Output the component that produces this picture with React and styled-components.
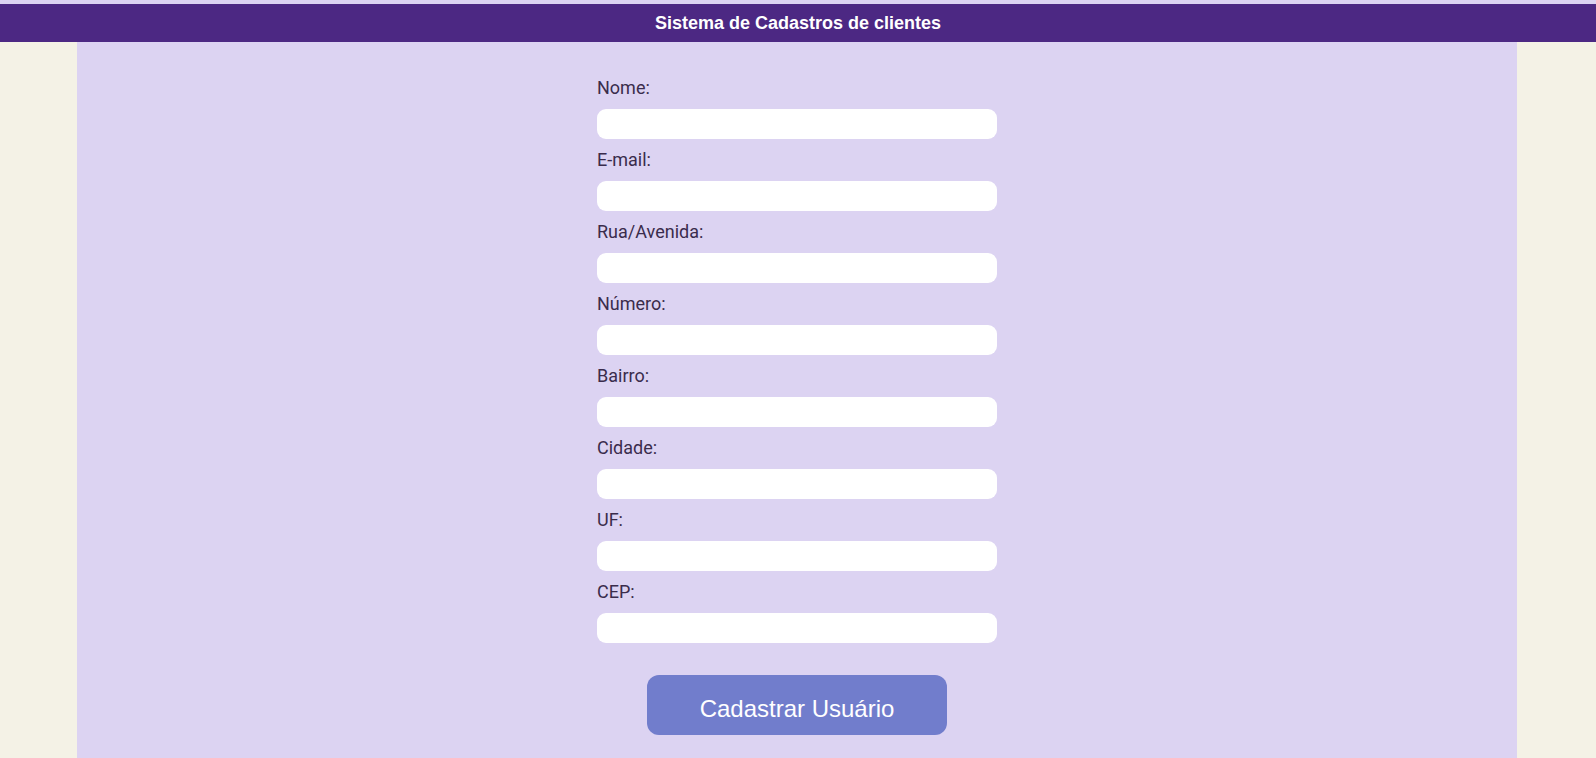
import React from 'react';
import styled, { createGlobalStyle } from 'styled-components';

const GlobalStyle = createGlobalStyle`
  html, body {
    margin: 0;
    padding: 0;
  }
  body {
    background: #f4f2e6;
    font-family: 'Roboto', 'Liberation Sans', sans-serif;
    padding-top: 4px;
    box-shadow: inset 0 4px 0 #dcd3f2;
    min-height: 758px;
  }
`;

const Header = styled.header`
  background: #4c2883;
  height: 38px;
  display: flex;
  align-items: center;
  justify-content: center;
  color: #ffffff;
  font-family: 'Liberation Sans', Arial, sans-serif;
  font-weight: 700;
  font-size: 18px;
`;

const Panel = styled.main`
  width: 1440px;
  margin-left: 77px;
  background: #dcd3f2;
  min-height: 716px;
  padding: 35px 0 40px;
  box-sizing: border-box;
  display: flex;
  flex-direction: column;
  align-items: center;
`;

const Form = styled.form`
  width: 400px;
  display: flex;
  flex-direction: column;
`;

const Label = styled.label`
  display: block;
  font-size: 18px;
  line-height: 22px;
  color: #3a2c4c;
  margin-bottom: 10px;
`;

const Input = styled.input`
  display: block;
  width: 100%;
  height: 30px;
  box-sizing: border-box;
  border: none;
  border-radius: 9px;
  background: #ffffff;
  margin: 0 0 10px;
  padding: 0 10px;
  font-size: 16px;
  outline: none;
`;

const Button = styled.button`
  margin-top: 22px;
  width: 300px;
  height: 60px;
  padding: 8px 0 0;
  border: none;
  border-radius: 12px;
  background: #717dcc;
  color: #ffffff;
  font-family: 'Liberation Sans', Arial, sans-serif;
  font-size: 24px;
  cursor: pointer;
  align-self: center;
`;

const FIELDS = ['Nome:', 'E-mail:', 'Rua/Avenida:', 'Número:', 'Bairro:', 'Cidade:', 'UF:', 'CEP:'];

const App = () => (
  <>
    <GlobalStyle />
    <Header>Sistema de Cadastros de clientes</Header>
    <Panel>
      <Form onSubmit={(e) => e.preventDefault()}>
        {FIELDS.map((f) => (
          <React.Fragment key={f}>
            <Label>{f}</Label>
            <Input type="text" />
          </React.Fragment>
        ))}
        <Button type="submit">Cadastrar Usuário</Button>
      </Form>
    </Panel>
  </>
);

export default App;
